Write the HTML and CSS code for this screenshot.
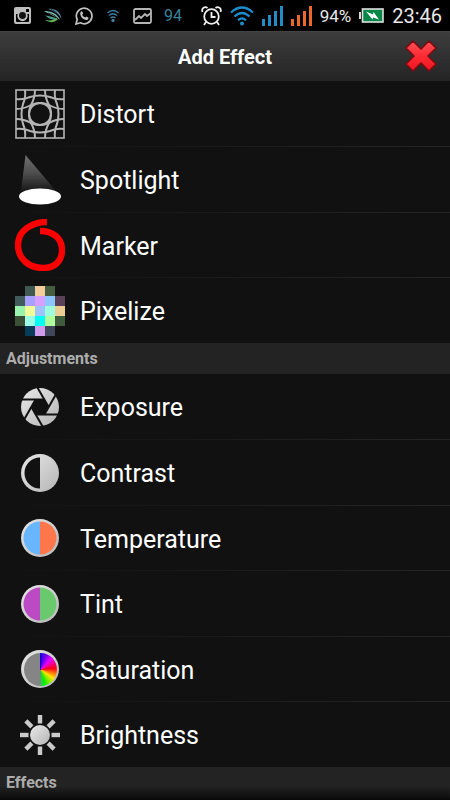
FILE: index.html
```html
<!DOCTYPE html>
<html lang="en">
<head>
<meta charset="utf-8">
<meta name="viewport" content="width=device-width, initial-scale=1">
<title>Add Effect</title>
<link rel="stylesheet" href="styles.css">
</head>
<body>
<div class="status">
  <div class="notices">
    <svg width="17" height="18" viewBox="0 0 17 18"><path fill="#bdbdbd" fill-rule="evenodd" d="M2 0h13a2 2 0 0 1 2 2v13a2 2 0 0 1-2 2H2a2 2 0 0 1-2-2V2a2 2 0 0 1 2-2zM2 7v7q0 1 1 1h11q1 0 1-1V7h-2a5 5 0 1 1-9 0zM12 2v3h3V2z"/><circle cx="8.500" cy="8.500" r="4.200" fill="#111" stroke="#bdbdbd" stroke-width="1.500"/></svg>
    <svg width="20" height="16" viewBox="0 0 20 16"><path fill="#5a8aa8" d="M5 1C12 0 18 4 18.500 11C16 6 11 3 5 1z"/><path fill="#7fc0b4" d="M1 3C8 3 14 5 17 12C13 8 7 7 1 3z"/><path fill="#4b9a82" d="M2 7C7 9 11 8 15 12C10 12 5 11 2 7z"/><path fill="#65b45a" d="M2 12C8 13 12 12 15 9C15 14 8 16 2 12z"/><path fill="none" stroke="#000" stroke-width=".7" d="M8 1.500c5 2 8 5 9 9M5 5c5 1 8 3 10 6"/></svg>
    <svg width="18" height="18" viewBox="0 0 18 18"><path fill="none" stroke="#c2c2c2" stroke-width="1.700" d="M1 17l1.200-4.500A7.800 7.800 0 1 1 5.400 15.800z"/><path fill="#c2c2c2" d="M5.500 5c1-1.200 1.700-.8 2 0l.6 1.600-.9 1.200c.7 1.400 1.700 2.200 3 2.800l1.100-1.200 2 1c.6.400 0 2.200-1.200 2.500C9 13.800 4 9 5.500 5z"/></svg>
    <svg width="16" height="14" viewBox="-2 0 16 14" fill="none" stroke="#3f7fa0" stroke-width="1.400"><path d="M0.500 4Q6-1 11.500 4M2 6.500Q6 3 10 6.500M3.500 9Q6 7 8.500 9"/><circle cx="6" cy="11.500" r="1" fill="#3f7fa0"/></svg>
    <svg width="19" height="16" viewBox="0 0 19 16" fill="none" stroke="#b5b5b5" stroke-width="1.800"><rect x="1" y="1" width="17" height="14" rx="1.500"/><path d="M2 12l4-4 2 2 4-4 2 2 4-3"/></svg>
    <span class="temp">94</span>
  </div>
  <div class="system">
    <svg width="21" height="20" viewBox="0 0 21 20" fill="none" stroke="#f0f0f0" stroke-width="1.800"><circle cx="10.500" cy="10.500" r="7.300"/><path d="M10.500 6v5h4M1.500 6C0 2 4 0 6.500 2M19.500 6C21 2 17 0 14.500 2M5 16l-2 3M16 16l2 3"/></svg>
    <svg width="24" height="20" viewBox="0 0 24 20" fill="none" stroke="#1c8dcc" stroke-width="2.200"><path d="M1 6.500Q12-3.500 23 6.500M4.500 10.500Q12 3.500 19.500 10.500M8 14.200Q12 10.500 16 14.200"/><circle cx="12" cy="17.500" r="2" fill="#1c8dcc" stroke="none"/></svg>
    <svg width="21" height="20" viewBox="0 0 21 20" fill="#238cc5"><path d="M0 13h3v7H0zM6 9h3v11H6zM12 5h3v15h-3zM18 0h3v20h-3z"/></svg>
    <svg width="21" height="20" viewBox="0 0 21 20" fill="#e9692c"><path d="M0 13h3v7H0zM6 9h3v11H6zM12 5h3v15h-3zM18 0h3v20h-3z"/></svg>
    <span class="percent">94%</span>
    <svg width="25" height="15" viewBox="0 0 25 15"><path fill="#d8d8d8" d="M0 4h2v7H0z"/><rect x="3.500" y="1" width="20.500" height="13" fill="#078747" stroke="#e0e0e0" stroke-width="1.600"/><path fill="#fff" d="M7 3.500l7 3 .5-2.500L20 11.500l-6-2-.5 2z"/></svg>
    <span class="clock">23:46</span>
  </div>
</div>

<header class="bar">
  <h1>Add Effect</h1>
  <button class="close" aria-label="Close"><svg width="34" height="34" viewBox="0 0 34 34">
    <defs><linearGradient id="red" x1="0" y1="0" x2="0" y2="1"><stop offset="0" stop-color="#ff5157"/><stop offset=".5" stop-color="#fb2b34"/><stop offset="1" stop-color="#ed1420"/></linearGradient></defs>
    <path d="M9 2l8 8 8-8 7 7-8 8 8 8-7 7-8-8-8 8-7-7 8-8-8-8z" fill="url(#red)" stroke="#7b0b10" stroke-width="1.600" stroke-linejoin="round"/>
  </svg></button>
</header>

<main>
  <ul class="list">
    <li><button class="row"><span class="icon"><svg width="50" height="50" viewBox="0 0 50 50" fill="none" stroke="#b4b4b4" stroke-width="2">
      <rect x="1" y="1" width="48" height="48" stroke-width="1.600"/>
      <path d="M10 1Q11 8 8 15Q5 25 8 35Q11 42 10 49M20 1Q20 9 16 16Q12 25 16 34Q20 41 20 49M30 1Q30 9 34 16Q38 25 34 34Q30 41 30 49M40 1Q39 8 42 15Q45 25 42 35Q39 42 40 49"/>
      <path d="M1 10Q8 11 15 8Q25 5 35 8Q42 11 49 10M1 20Q9 20 16 16Q25 12 34 16Q41 20 49 20M1 30Q9 30 16 34Q25 38 34 34Q41 30 49 30M1 40Q8 39 15 42Q25 45 35 42Q42 39 49 40"/>
      <circle cx="25" cy="25" r="11"/>
    </svg></span>Distort</button></li>
    <li><button class="row"><span class="icon"><svg width="50" height="50" viewBox="0 0 50 50">
      <defs><linearGradient id="beam" x1="0" y1="0" x2="0" y2="1"><stop offset="0" stop-color="#707070"/><stop offset=".5" stop-color="#4e4e4e"/><stop offset="1" stop-color="#181818"/></linearGradient></defs>
      <path d="M10.500 0L41 36H6z" fill="url(#beam)"/><ellipse cx="25" cy="41.500" rx="21" ry="8" fill="#fff"/>
    </svg></span>Spotlight</button></li>
    <li><button class="row"><span class="icon"><svg width="50" height="52" viewBox="0 0 50 52" fill="none" stroke="#fb0000" stroke-width="6.400"><path d="M32 3C16 3 3 12 3 26C3 40 14 49 28 49C40 49 47 42 47 31C47 19 38 12 25 12"/></svg></span>Marker</button></li>
    <li><button class="row"><span class="icon"><svg width="50" height="50" viewBox="0 0 5 5" shape-rendering="crispEdges">
      <path fill="#405752" d="M1 0h1v1H1z"/><path fill="#f3cd9b" d="M2 0h1v1H2z"/><path fill="#455e40" d="M3 0h1v1H3z"/>
      <path fill="#405b59" d="M0 1h1v1H0z"/><path fill="#a8a0ff" d="M1 1h1v1H1z"/><path fill="#d79fff" d="M2 1h1v1H2z"/><path fill="#8cc6ff" d="M3 1h1v1H3z"/><path fill="#5b4059" d="M4 1h1v1H4z"/>
      <path fill="#98f4ad" d="M0 2h1v1H0z"/><path fill="#f1ff9b" d="M1 2h1v1H1z"/><path fill="#9fc3ff" d="M2 2h1v1H2z"/><path fill="#9dffdb" d="M3 2h1v1H3z"/><path fill="#ebcc92" d="M4 2h1v1H4z"/>
      <path fill="#3c5038" d="M0 3h1v1H0z"/><path fill="#9dffe5" d="M1 3h1v1H1z"/><path fill="#00fff4" d="M2 3h1v1H2z"/><path fill="#afff9c" d="M3 3h1v1H3z"/><path fill="#405b3b" d="M4 3h1v1H4z"/>
      <path fill="#083c59" d="M1 4h1v1H1z"/><path fill="#d09bea" d="M2 4h1v1H2z"/><path fill="#40475a" d="M3 4h1v1H3z"/>
    </svg></span>Pixelize</button></li>
  </ul>

  <h2>Adjustments</h2>
  <ul class="list">
    <li><button class="row"><span class="icon"><svg width="40" height="40" viewBox="-20 -20 40 40">
      <defs><linearGradient id="metal" x1="0" y1="0" x2="1" y2="1"><stop offset="0" stop-color="#e8e8e8"/><stop offset="1" stop-color="#b5b5b5"/></linearGradient></defs>
      <circle r="19" fill="url(#metal)"/><path fill="#111" d="M-4.500-7.500H4.500L8.500 0L4.500 7.500H-4.500L-8.500 0z"/>
      <g stroke="#111" stroke-width="2"><path id="blade" d="M-19-7.500H4.500"/><use href="#blade" transform="rotate(60)"/><use href="#blade" transform="rotate(120)"/><use href="#blade" transform="rotate(180)"/><use href="#blade" transform="rotate(240)"/><use href="#blade" transform="rotate(300)"/></g>
    </svg></span>Exposure</button></li>
    <li><button class="row"><span class="icon"><svg width="40" height="40" viewBox="-20 -20 40 40"><circle r="19" fill="url(#metal)"/><path fill="#111" d="M0-15.500A15.500 15.500 0 0 0 0 15.500z"/></svg></span>Contrast</button></li>
    <li><button class="row"><span class="icon"><svg width="40" height="40" viewBox="-20 -20 40 40"><circle r="19" fill="url(#metal)"/><path fill="#67b6ff" d="M0-16.500A16.500 16.500 0 0 0 0 16.500z"/><path fill="#ff774b" d="M0-16.500A16.500 16.500 0 0 1 0 16.500z"/></svg></span>Temperature</button></li>
    <li><button class="row"><span class="icon"><svg width="40" height="40" viewBox="-20 -20 40 40"><circle r="19" fill="url(#metal)"/><path fill="#bd4ac5" d="M0-16.500A16.500 16.500 0 0 0 0 16.500z"/><path fill="#6bc96d" d="M0-16.500A16.500 16.500 0 0 1 0 16.500z"/></svg></span>Tint</button></li>
    <li><button class="row"><span class="icon"><svg width="40" height="40" viewBox="-20 -20 40 40"><circle r="19" fill="url(#metal)"/><foreignObject x="-16.500" y="-16.500" width="33" height="33"><div class="wheel"></div></foreignObject></svg></span>Saturation</button></li>
    <li><button class="row"><span class="icon"><svg width="40" height="40" viewBox="-20 -20 40 40"><circle r="10" fill="url(#metal)"/><g fill="#cacaca"><path id="ray" d="M-2.200-20h4.400v8.500h-4.400z"/><use href="#ray" transform="rotate(45)"/><use href="#ray" transform="rotate(90)"/><use href="#ray" transform="rotate(135)"/><use href="#ray" transform="rotate(180)"/><use href="#ray" transform="rotate(225)"/><use href="#ray" transform="rotate(270)"/><use href="#ray" transform="rotate(315)"/></g></svg></span>Brightness</button></li>
  </ul>
  <h2>Effects</h2>
</main>
<div class="fade"></div>
</body>
</html>
```

FILE: styles.css
```css
* { box-sizing: border-box; }
html, body { height: 100%; }
body {
  margin: 0;
  display: flex;
  flex-direction: column;
  overflow: hidden;
  background: #111;
  color: #fff;
  font-family: Roboto, "Liberation Sans", sans-serif;
}
svg { display: block; flex: none; }
button {
  margin: 0;
  border: 0;
  padding: 0;
  background: none;
  color: inherit;
  font: inherit;
}
.status {
  display: flex;
  flex: none;
  justify-content: space-between;
  align-items: center;
  height: 31px;
  padding: 0 8px 0 14px;
  background: #000;
}
.notices, .system { display: flex; align-items: center; }
.notices { gap: 12px; }
.system { gap: 8px; }
.temp { color: #3a8398; font-size: 16px; }
.percent { color: #e8e8e8; font-size: 17px; }
.clock { color: #e8e8e8; font-size: 20px; }
.bar {
  display: grid;
  flex: none;
  grid-template-columns: 48px 1fr 48px;
  align-items: center;
  height: 50px;
  border-top: 1px solid #444;
  padding: 0 5px;
  background: linear-gradient(#3d3d3d, #242424);
}
h1 {
  grid-column: 2;
  margin: 0;
  font-size: 20px;
  font-weight: 700;
  line-height: 24px;
  text-align: center;
}
.close {
  justify-self: center;
  padding-bottom: 2px;
}
main { flex: none; }
.list {
  display: grid;
  grid-auto-rows: 65px 66px;
  margin: 0;
  padding: 0;
  list-style: none;
}
li + li {
  border-top: 1px solid;
  border-image: linear-gradient(90deg, #111, #252525) 1;
}
.row {
  display: flex;
  align-items: center;
  gap: 15px;
  width: 100%;
  height: 100%;
  padding: 2px 15px 0;
  font-size: 25px;
  text-align: left;
}
.icon {
  display: flex;
  flex: none;
  justify-content: center;
  width: 50px;
  margin-bottom: 2px;
}
h2 {
  margin: 0;
  padding: 0 6px;
  background: #232323;
  color: #adadad;
  font-size: 16px;
  font-weight: 700;
  line-height: 31px;
}
.wheel {
  height: 100%;
  border-radius: 50%;
  background: conic-gradient(#1500d8, #e600ff 45deg, #ff0015 85deg, #ffe600 125deg, #00f000 165deg, #00e050 180deg, #858585 180deg);
}
.fade {
  position: fixed;
  inset: auto 0 0;
  height: 14px;
  background: linear-gradient(transparent, #0b0b0b);
}
```
